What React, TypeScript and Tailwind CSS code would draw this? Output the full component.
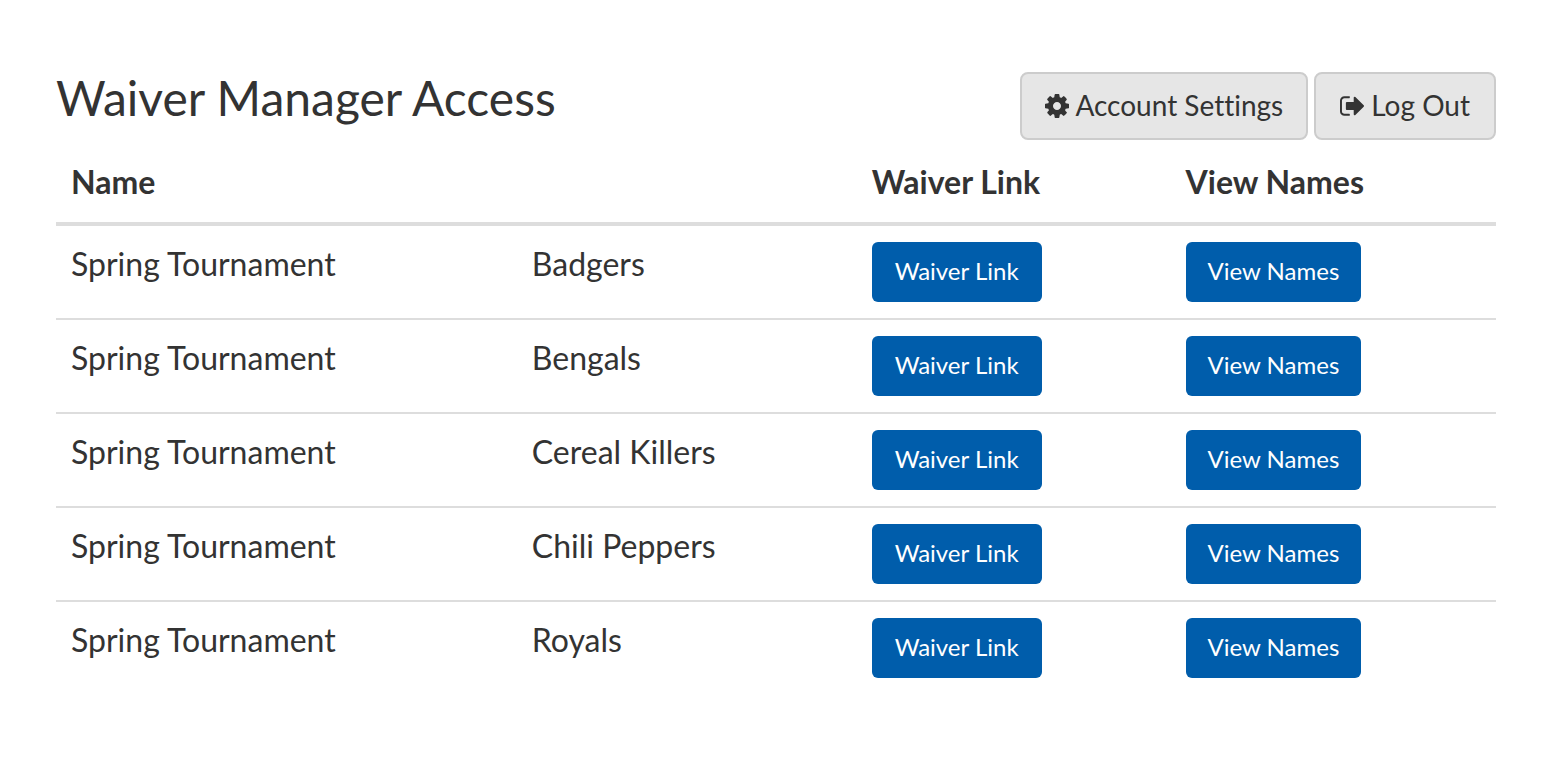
const teams = ["Badgers", "Bengals", "Cereal Killers", "Chili Peppers", "Royals"];

const topButton =
  "flex h-[68px] items-center rounded-lg border-2 border-[#cccccc] bg-[#e6e6e6] pb-0.5 text-[28px] leading-9 whitespace-nowrap text-[#333333]";
const rowButton =
  "block h-[60px] min-w-[170px] rounded-md bg-[#005dab] px-[22px] pb-0.5 text-2xl leading-9 text-white whitespace-nowrap";
const headCell = "px-[15px] pt-5 pb-[18px] font-bold";
const cell = "px-[15px] py-4";

function CogIcon() {
  return (
    <svg className="mt-0.5 mr-1.5 h-6 w-6" viewBox="128 128 1536 1536" fill="currentColor" aria-hidden="true">
      <path d="M1152 896q0-106-75-181t-181-75-181 75-75 181 75 181 181 75 181-75 75-181zm512-109v222q0 12-8 23t-20 13l-185 28q-19 54-39 91 35 50 107 138 10 12 10 25t-9 23q-27 37-99 108t-94 71q-12 0-26-9l-138-108q-44 23-91 38-16 136-29 186-7 28-36 28h-222q-14 0-24.500-8.500t-11.500-21.500l-28-184q-49-16-90-37l-141 107q-10 9-25 9-14 0-25-11-126-114-165-168-7-10-7-23 0-12 8-23 15-21 51-66.500t54-70.500q-27-50-41-99l-183-27q-13-2-21-12.500t-8-23.500v-222q0-12 8-23t19-13l186-28q14-46 39-92-40-57-107-138-10-12-10-24 0-10 9-23 26-36 98.500-107.500t94.500-71.500q13 0 26 10l138 107q44-23 91-38 16-136 29-186 7-28 36-28h222q14 0 24.500 8.500t11.500 21.500l28 184q49 16 90 37l142-107q9-9 24-9 13 0 25 10 129 119 165 170 7 8 7 22 0 12-8 23-15 21-51 66.500t-54 70.500q26 50 41 98l183 28q13 2 21 12.500t8 23.500z" />
    </svg>
  );
}

function SignOutIcon() {
  return (
    <svg className="mt-0.5 mr-[7px] h-5 w-6" viewBox="0 128 1568 1280" fill="currentColor" aria-hidden="true">
      <path d="M640 1312q0 4 1 20t.5 26.500-3 23.500-10 19.500-20.500 6.500h-320q-119 0-203.500-84.500t-84.500-203.500v-704q0-119 84.500-203.500t203.500-84.500h320q13 0 22.500 9.500t9.500 22.500q0 4 1 20t.5 26.500-3 23.500-10 19.500-20.500 6.500h-320q-66 0-113 47t-47 113v704q0 66 47 113t113 47h312l11.500 1 11.500 3 8 5.500 7 9 2 13.500zm928-544q0 26-19 45l-544 544q-19 19-45 19t-45-19-19-45v-288h-448q-26 0-45-19t-19-45v-384q0-26 19-45t45-19h448v-288q0-26 19-45t45-19 45 19l544 544q19 19 19 45z" />
    </svg>
  );
}

export default function App() {
  return (
    <main className="min-h-screen bg-white pt-18 pr-[68px] pl-14 font-['Lato',sans-serif] text-[#333333] [font-variant-ligatures:none]">
      <header className="flex items-start justify-between">
        <h1 className="text-5xl leading-[52px]">Waiver Manager Access</h1>
        <div className="flex gap-1.5">
          <button type="button" className={`${topButton} px-[23px]`}>
            <CogIcon />
            Account Settings
          </button>
          <button type="button" className={`${topButton} px-6`}>
            <SignOutIcon />
            Log Out
          </button>
        </div>
      </header>
      <table className="w-full table-fixed border-collapse text-left text-[32px] leading-11">
        <colgroup>
          <col className="w-[32%]" />
          <col className="w-[23.6%]" />
          <col className="w-[21.8%]" />
          <col />
        </colgroup>
        <thead>
          <tr className="border-b-4 border-[#dddddd]">
            <th scope="col" colSpan={2} className={headCell}>Name</th>
            <th scope="col" className={headCell}>Waiver Link</th>
            <th scope="col" className={headCell}>View Names</th>
          </tr>
        </thead>
        <tbody>
          {teams.map((team) => (
            <tr key={team} className="border-b-2 border-[#dddddd] align-top last:border-b-0">
              <td className={cell}>Spring Tournament</td>
              <td className={cell}>{team}</td>
              <td className={cell}>
                <button type="button" className={rowButton}>Waiver Link</button>
              </td>
              <td className={cell}>
                <button type="button" className={rowButton}>View Names</button>
              </td>
            </tr>
          ))}
        </tbody>
      </table>
    </main>
  );
}
